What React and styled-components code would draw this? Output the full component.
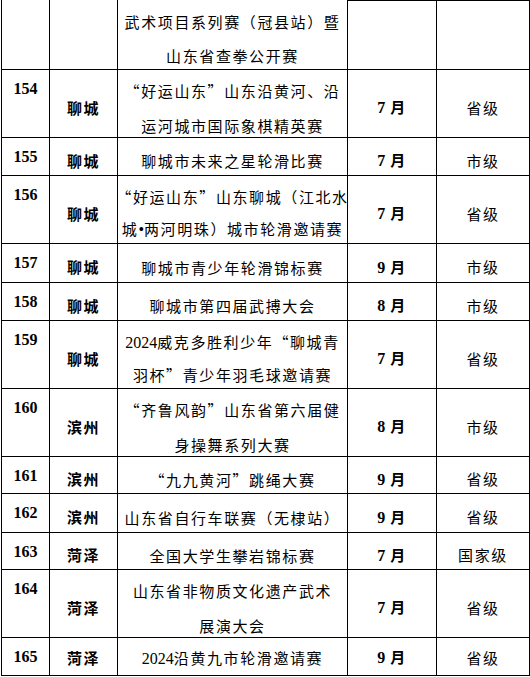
import styled, { createGlobalStyle } from "styled-components";

const GlobalStyle = createGlobalStyle`
  html, body {
    margin: 0;
    padding: 0;
    background: #ffffff;
  }
  body {
    font-family: "Noto Sans CJK SC", "Liberation Serif", serif;
    color: #000;
  }
`;

// rows of the table, the first one is cut off by the top of the page
const rows = [
  { no: "", city: "", event: ["武术项目系列赛（冠县站）暨", "山东省查拳公开赛"], month: "", level: "", h: 70, open: true, lh: 34 },
  { no: "154", city: "聊城", event: ["“好运山东”山东沿黄河、沿", "运河城市国际象棋精英赛"], month: "7", level: "省级", h: 68 },
  { no: "155", city: "聊城", event: ["聊城市未来之星轮滑比赛"], month: "7", level: "市级", h: 38 },
  { no: "156", city: "聊城", event: ["“好运山东”山东聊城（江北水", "城•两河明珠）城市轮滑邀请赛"], month: "7", level: "省级", h: 68, lh: 32 },
  { no: "157", city: "聊城", event: ["聊城市青少年轮滑锦标赛"], month: "9", level: "市级", h: 39 },
  { no: "158", city: "聊城", event: ["聊城市第四届武搏大会"], month: "8", level: "市级", h: 38 },
  { no: "159", city: "聊城", event: ["2024威克多胜利少年“聊城青", "羽杯”青少年羽毛球邀请赛"], month: "7", level: "省级", h: 68, lh: 32 },
  { no: "160", city: "滨州", event: ["“齐鲁风韵”山东省第六届健", "身操舞系列大赛"], month: "8", level: "市级", h: 68 },
  { no: "161", city: "滨州", event: ["“九九黄河”跳绳大赛"], month: "9", level: "省级", h: 37 },
  { no: "162", city: "滨州", event: ["山东省自行车联赛（无棣站）"], month: "9", level: "省级", h: 39 },
  { no: "163", city: "菏泽", event: ["全国大学生攀岩锦标赛"], month: "7", level: "国家级", h: 37 },
  { no: "164", city: "菏泽", event: ["山东省非物质文化遗产武术", "展演大会"], month: "7", level: "省级", h: 68 },
  { no: "165", city: "菏泽", event: ["2024沿黄九市轮滑邀请赛"], month: "9", level: "省级", h: 38, shift: 2 },
];

// digits and the middle dot come from the latin serif font, like in the document
function withLatin(text) {
  return text.split(/(\d+|•)/).map((part, i) =>
    /^(\d+|•)$/.test(part) ? <Latin key={i}>{part}</Latin> : part
  );
}

function App() {
  return (
    <>
      <GlobalStyle />
      <Page>
        {rows.map((r, idx) => (
          <Row key={idx} $h={r.h}>
            <NumCell $open={r.open}>{r.no}</NumCell>
            <CityCell $open={r.open} $shift={r.shift}>{r.city}</CityCell>
            <EventCell $open={r.open} $shift={r.shift} $lh={r.lh}>
              {r.event.map((line, i) => (
                <Line key={i}>{withLatin(line)}</Line>
              ))}
            </EventCell>
            <MonthCell $top={r.open} $shift={r.shift}>
              {r.month && (
                <Line>
                  <Latin>{r.month}</Latin> 月
                </Line>
              )}
            </MonthCell>
            <LevelCell $top={r.open} $shift={r.shift}>{r.level}</LevelCell>
          </Row>
        ))}
      </Page>
    </>
  );
}

export default App;

const Page = styled.div`
  padding-left: 1px;
  width: 529px;
`;

const Row = styled.div`
  display: grid;
  grid-template-columns: 49px 68px 230px 89px 93px;
  height: ${(p) => p.$h}px;
`;

const Cell = styled.div`
  box-sizing: border-box;
  display: flex;
  flex-direction: column;
  align-items: center;
  justify-content: center;
  min-height: 0;
  border-right: 1px solid #000;
  border-bottom: 1px solid #000;
  border-top: ${(p) => (p.$top ? "1px solid #000" : "none")};
  padding-top: ${(p) => (p.$shift !== undefined ? p.$shift : 8)}px;
  font-size: 15px;
  letter-spacing: 1.6px;
  white-space: nowrap;
  overflow: visible;
`;

const NumCell = styled(Cell)`
  border-left: 1px solid #000;
  justify-content: flex-start;
  padding-top: 9px;
  font-family: "Liberation Serif", serif;
  font-weight: 700;
  font-size: 16px;
  line-height: 20px;
  letter-spacing: 0;
`;

const CityCell = styled(Cell)`
  font-weight: 700;
  line-height: 22px;
`;

const EventCell = styled(Cell)`
  line-height: ${(p) => p.$lh || 35}px;
`;

const Line = styled.div`
  white-space: nowrap;
`;

const MonthCell = styled(Cell)`
  font-weight: 700;
  line-height: 22px;
`;

const LevelCell = styled(Cell)`
  font-weight: 400;
  line-height: 22px;
`;

const Latin = styled.span`
  font-family: "Liberation Serif", serif;
  font-size: 16px;
  letter-spacing: 0;
`;
